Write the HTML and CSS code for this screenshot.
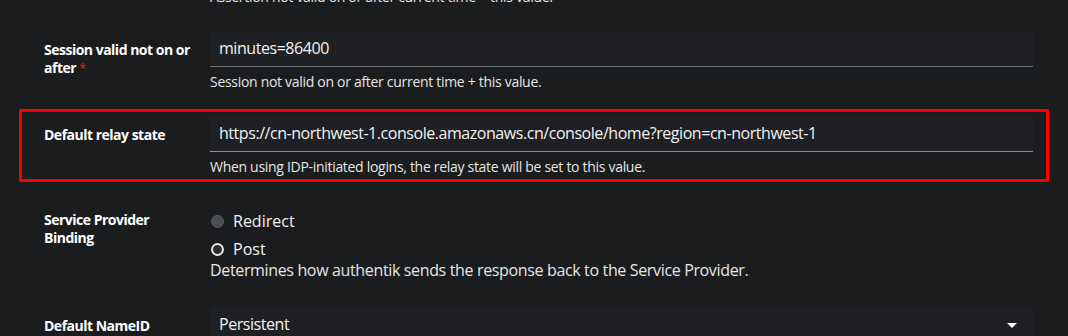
FILE: index.html
```html
<!DOCTYPE html>
<html>
<head>
<meta charset="utf-8">
<link rel="stylesheet" href="styles.css">
</head>
<body>
<div class="form">
  <div class="helper top-helper">Assertion not valid on or after current time + this value.</div>

  <div class="row">
    <div class="label">Session valid not on or after <span class="req">*</span></div>
    <div class="control">
      <div class="input">minutes=86400</div>
      <div class="helper">Session not valid on or after current time + this value.</div>
    </div>
  </div>

  <div class="highlight">
    <div class="row">
      <div class="label">Default relay state</div>
      <div class="control">
        <div class="input focused">https://cn-northwest-1.console.amazonaws.cn/console/home?region=cn-northwest-1</div>
        <div class="helper">When using IDP-initiated logins, the relay state will be set to this value.</div>
      </div>
    </div>
  </div>

  <div class="row">
    <div class="label">Service Provider Binding</div>
    <div class="control radios">
      <div class="radio"><span class="dot"></span>Redirect</div>
      <div class="radio"><span class="dot checked"></span>Post</div>
      <div class="helper big">Determines how authentik sends the response back to the Service Provider.</div>
    </div>
  </div>

  <div class="row last">
    <div class="label">Default NameID</div>
    <div class="control">
      <div class="input select">Persistent<span class="caret"></span></div>
    </div>
  </div>
</div>
</body>
</html>
```

FILE: styles.css
```css
html, body {
  margin: 0;
  padding: 0;
  background: #1b1c1e;
  overflow: hidden;
}
body {
  width: 1068px;
  height: 336px;
  font-family: "Open Sans", "Liberation Sans", sans-serif;
  color: #ffffff;
}
.form {
  display: flex;
  flex-direction: column;
  gap: 24px;
  padding: 0 35px 0 44px;
  margin-top: -14px;
}
.row {
  display: grid;
  grid-template-columns: 166px 1fr;
}
.label {
  font-weight: 700;
  font-size: 14px;
  line-height: 18px;
  padding-top: 10px;
  padding-right: 12px;
  letter-spacing: -0.5px;
}
.req {
  color: #c9190b;
  font-size: 12px;
}
.control {
  display: flex;
  flex-direction: column;
}
.input {
  height: 35px;
  padding: 0 9px;
  background: #1f2023;
  border-bottom: 1px solid #6a6e73;
  box-sizing: content-box;
  font-size: 16px;
  line-height: 35px;
  color: #f2f2f2;
  white-space: nowrap;
  letter-spacing: -0.45px;
}
.input.focused {
  border-bottom-color: #4a9fe6;
}
.helper {
  font-size: 14px;
  line-height: 21px;
  margin-top: 4px;
  color: #e6e6e6;
  letter-spacing: -0.3px;
}
.top-helper {
  padding-left: 166px;
  margin-top: 0;
}
.helper.big {
  font-size: 16px;
  margin-top: -5px;
  letter-spacing: -0.35px;
}
.highlight {
  border: 3px solid #ff0000;
  border-radius: 2px;
  margin: -7px -16px -5px -25px;
  padding: 4px 13px 2px 22px;
}
.radios {
  padding-top: 8px;
}
.radio {
  display: flex;
  align-items: center;
  font-size: 16px;
  line-height: 24px;
  height: 24px;
  margin-bottom: 4px;
  color: #f2f2f2;
}
.dot {
  width: 13px;
  height: 13px;
  box-sizing: border-box;
  border-radius: 50%;
  background: #4a4c50;
  border: 1px solid #5a5d61;
  margin: 0 9px 0 1px;
}
.dot.checked {
  background: #2a2c30;
  border: 2px solid #e8e8e8;
}
.row.last {
  margin-top: 2px;
}
.select {
  position: relative;
  height: 37px;
}
.caret {
  position: absolute;
  right: 16px;
  top: 16px;
  width: 0;
  height: 0;
  border-left: 5px solid transparent;
  border-right: 5px solid transparent;
  border-top: 5px solid #ffffff;
}
```
